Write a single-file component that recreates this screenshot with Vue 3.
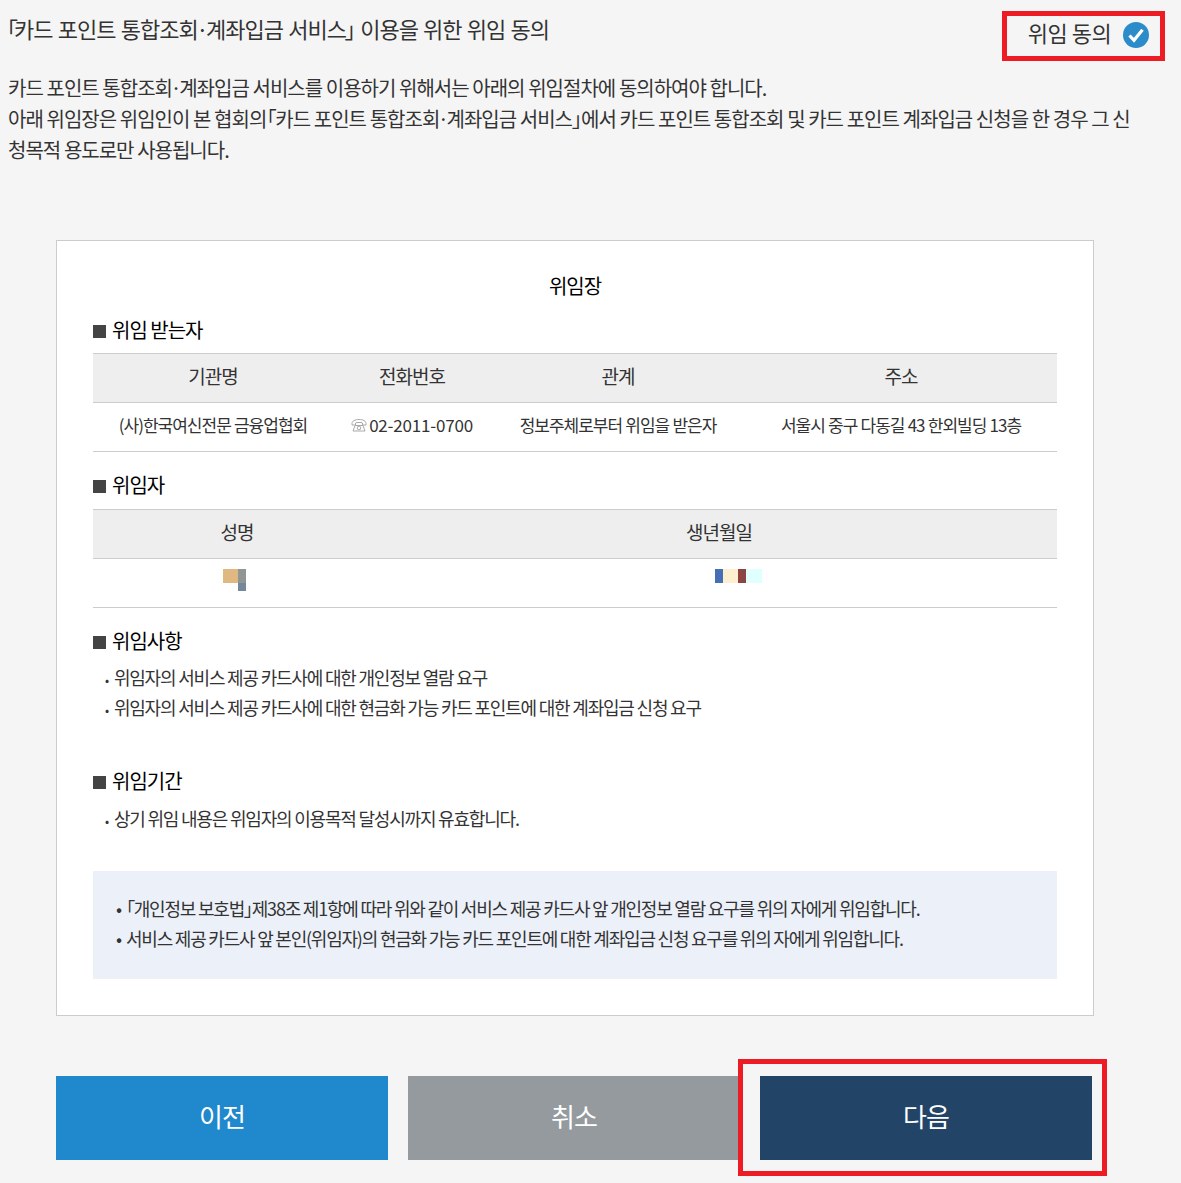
<template>
  <div class="page">
    <header class="top">
      <h1 class="title"><span class="p open">「</span>카드 포인트 통합조회<span class="p mid">·</span>계좌입금 서비스<span class="p close">」</span> 이용을 위한 위임 동의</h1>
      <div class="agree">
        <span class="agree-text">위임 동의</span>
        <svg width="26" height="26" viewBox="0 0 26 26">
          <circle cx="13" cy="13" r="13" fill="#2b8cc9" />
          <path d="M6.500 13.500l4.500 4.800L19.500 7.800" fill="none" stroke="#fff" stroke-width="3.200" />
        </svg>
      </div>
    </header>

    <p class="intro">
      카드 포인트 통합조회<span class="p mid">·</span>계좌입금 서비스를 이용하기 위해서는 아래의 위임절차에 동의하여야 합니다.<br />
      아래 위임장은 위임인이 본 협회의<span class="p">「</span>카드 포인트 통합조회<span class="p mid">·</span>계좌입금 서비스<span class="p">」</span>에서 카드 포인트 통합조회 및 카드 포인트 계좌입금 신청을 한 경우 그 신<br />
      청목적 용도로만 사용됩니다.
    </p>

    <section class="card">
      <h2 class="doc-title">위임장</h2>

      <h3 class="sec first">위임 받는자</h3>
      <div class="table four">
        <div class="th">기관명</div>
        <div class="th">전화번호</div>
        <div class="th">관계</div>
        <div class="th">주소</div>
        <div class="td">(사)한국여신전문 금융업협회</div>
        <div class="td">
          <svg class="phone" width="16" height="14" viewBox="0 0 16 14">
            <path d="M1 5.500C1 3 4 1.500 8 1.500s7 1.500 7 4v1.500h-3.500V5L10 4.500H6L4.500 5v2H1z" fill="none" stroke="#aaa" />
            <path d="M4 7.500h8l2 5.500H2z" fill="none" stroke="#aaa" />
            <circle cx="8" cy="10" r="1.800" fill="none" stroke="#aaa" />
          </svg><span class="tel">02-2011-0700</span>
        </div>
        <div class="td">정보주체로부터 위임을 받은자</div>
        <div class="td">서울시 중구 다동길 43 한외빌딩 13층</div>
      </div>

      <h3 class="sec">위임자</h3>
      <div class="table two">
        <div class="th">성명</div>
        <div class="th">생년월일</div>
        <div class="td masked">
          <div class="mosaic name">
            <i v-for="c in nameCells" :key="c.x + '-' + c.y" :style="{ background: c.color, gridColumn: c.x, gridRow: c.y }"></i>
          </div>
        </div>
        <div class="td masked">
          <div class="mosaic birth">
            <i v-for="c in birthCells" :key="c" :style="{ background: c }"></i>
          </div>
        </div>
      </div>

      <h3 class="sec tight">위임사항</h3>
      <ul class="list">
        <li>위임자의 서비스 제공 카드사에 대한 개인정보 열람 요구</li>
        <li>위임자의 서비스 제공 카드사에 대한 현금화 가능 카드 포인트에 대한 계좌입금 신청 요구</li>
      </ul>

      <h3 class="sec period">위임기간</h3>
      <ul class="list">
        <li>상기 위임 내용은 위임자의 이용목적 달성시까지 유효합니다.</li>
      </ul>

      <div class="notice">
        <p><span class="dot">•</span><span class="p">「</span>개인정보 보호법<span class="p">」</span>제38조 제1항에 따라 위와 같이 서비스 제공 카드사 앞 개인정보 열람 요구를 위의 자에게 위임합니다.</p>
        <p><span class="dot">•</span>서비스 제공 카드사 앞 본인(위임자)의 현금화 가능 카드 포인트에 대한 계좌입금 신청 요구를 위의 자에게 위임합니다.</p>
      </div>
    </section>

    <div class="buttons">
      <button class="btn prev">이전</button>
      <button class="btn cancel">취소</button>
      <button class="btn next">다음</button>
    </div>
  </div>
</template>

<script setup>
const nameCells = [
  { x: 1, y: 1, color: "#e0b882" },
  { x: 2, y: 1, color: "#8f9694" },
  { x: 2, y: 2, color: "#74889a" }
]

const birthCells = ["#4570b5", "#fdefd0", "#8c4343", "#e0ffff"]
</script>

<style>
html,
body {
  margin: 0;
  background: #f5f5f5;
}
</style>

<style scoped>
.page {
  width: 1181px;
  height: 1183px;
  box-sizing: border-box;
  padding: 11px 16px 0 8px;
  background: #f5f5f5;
  color: #333;
  font-family: "Noto Sans CJK KR", "Noto Sans", sans-serif;
  overflow: hidden;
}

/* brackets and middle dots are narrow in the original */
.p {
  font-feature-settings: "palt";
}

.mid {
  margin: 0 -1.500px;
}

.open {
  margin: 0 -2.500px 0 -1.500px;
}

.close {
  margin-left: -1px;
}

.top {
  display: flex;
  justify-content: space-between;
  align-items: flex-start;
  height: 50px;
}

.title {
  margin: -1px 0 0;
  font-size: 22px;
  line-height: 36px;
  font-weight: 400;
  letter-spacing: -1px;
  word-spacing: 1.300px;
  white-space: nowrap;
}

.agree {
  display: flex;
  align-items: center;
  justify-content: center;
  gap: 12px;
  width: 163px;
  height: 50px;
  box-sizing: border-box;
  padding: 0 0 2px 10px;
  border: 5px solid #ed1c24;
  font-size: 22px;
  letter-spacing: -0.5px;
}

.agree-text {
  margin-top: -6px;
}

.intro {
  margin: 11px 0 0;
  font-size: 20px;
  line-height: 31px;
  letter-spacing: -1px;
  word-spacing: 0.200px;
  white-space: nowrap;
}

.card {
  margin: 75px 0 0 48px;
  width: 1038px;
  height: 776px;
  box-sizing: border-box;
  padding: 27px 36px 0;
  border: 1px solid #ccc;
  background: #fff;
  color: #333;
}

.doc-title {
  margin: 0;
  text-align: center;
  font-size: 20px;
  line-height: 36px;
  font-weight: 400;
  color: #000;
  letter-spacing: -1px;
}

.sec {
  display: flex;
  align-items: center;
  gap: 6px;
  margin: 15px 0 6px;
  font-size: 20px;
  line-height: 36px;
  font-weight: 400;
  color: #000;
  letter-spacing: -1px;
}

.sec::before {
  content: "";
  width: 13px;
  height: 13px;
  margin-top: 2px;
  background: #444;
}

.sec.first {
  margin-top: 8px;
  margin-bottom: 5px;
}

.sec.tight {
  margin-bottom: 3px;
}

.sec.period {
  margin-top: 41px;
  margin-bottom: 4px;
}

.table {
  display: grid;
  border-top: 1px solid #ccc;
}

.four {
  grid-template-columns: 240px 158px 254px 312px;
}

.two {
  grid-template-columns: 288px 676px;
}

.th,
.td {
  display: flex;
  align-items: center;
  justify-content: center;
  box-sizing: content-box;
  border-bottom: 1px solid #ccc;
  letter-spacing: -1px;
  white-space: nowrap;
}

.th {
  height: 43px;
  padding-bottom: 5px;
  background: #eee;
  font-size: 19px;
}

.td {
  height: 43px;
  padding-bottom: 5px;
  font-size: 17px;
  word-spacing: 0.400px;
}

.td.masked {
  align-items: flex-start;
  height: 38px;
  padding: 10px 0 0;
}

.tel {
  letter-spacing: -0.2px;
}

.phone {
  margin-right: 2px;
}

.mosaic {
  display: grid;
}

.mosaic i {
  display: block;
}

.name {
  grid-template-columns: 15px 8px;
  grid-template-rows: 14px 8px;
  margin-right: 6px;
}

.birth {
  grid-template-columns: 8px 15px 8px 16px;
  grid-template-rows: 14px;
  margin-left: 38px;
}

.list {
  list-style: none;
  margin: 0;
  padding: 0 0 0 12px;
  font-size: 18px;
  line-height: 30px;
  letter-spacing: -1.200px;
}

.list li::before {
  content: "•";
  font-size: 12px;
  line-height: 1;
  margin-right: 6px;
}

.notice {
  margin-top: 38px;
  height: 108px;
  box-sizing: border-box;
  padding: 22px 23px 0;
  background: #ebf0f9;
  font-size: 18px;
  line-height: 30px;
  letter-spacing: -1.220px;
}

.notice p {
  margin: 0;
}

.dot {
  display: inline-block;
  width: 10px;
}

.buttons {
  display: flex;
  gap: 20px;
  margin: 60px 0 0 48px;
}

.btn {
  position: relative;
  width: 332px;
  height: 84px;
  padding: 0 0 6px;
  border: 0;
  color: #fff;
  font-family: inherit;
  font-size: 26px;
  letter-spacing: -1px;
}

.prev {
  background: #2088cc;
}

.cancel {
  background: #959a9e;
}

.next {
  background: #224466;
}

/* red highlight drawn over the button */
.next::after {
  content: "";
  position: absolute;
  left: -22px;
  top: -17px;
  width: 369px;
  height: 117px;
  box-sizing: border-box;
  border: 5px solid #ed1c24;
}
</style>
